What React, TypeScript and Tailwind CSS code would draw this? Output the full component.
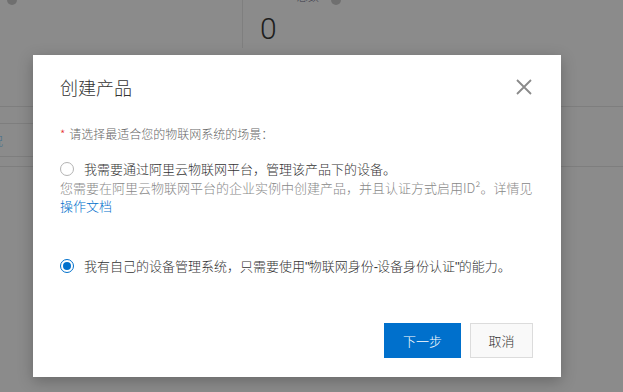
import React from "react";

function Radio({ checked }: { checked?: boolean }) {
  return checked ? (
    <span className="flex h-[14px] w-[14px] shrink-0 items-center justify-center rounded-full border border-[#0070cc] bg-white">
      <span className="h-[8px] w-[8px] rounded-full bg-[#0070cc]" />
    </span>
  ) : (
    <span className="h-[14px] w-[14px] shrink-0 rounded-full border border-[#b3b3b3] bg-white" />
  );
}

function Narrow({ children }: { children: React.ReactNode }) {
  return <span className="font-['Liberation_Sans',sans-serif] tracking-[-1px]">{children}</span>;
}

export default function App() {
  return (
    <div className="relative h-[392px] w-[623px] overflow-hidden bg-[#8b8b8b] font-['Noto_Sans_CJK_SC',sans-serif] font-light">
      {/* dimmed page behind */}
      <div className="flex h-[48px]">
        <div className="w-[243px] border-r border-[#7f7f7f]">
          <div className="-mt-[5px] ml-[7px] h-[10px] w-[10px] rounded-full bg-[#6f6f6f]" />
        </div>
        <div className="flex flex-1">
          <div className="pl-[17px] pt-[11px] font-['Roboto',sans-serif] text-[30px] font-light leading-[36px] text-[#1e1e1e]">
            0
          </div>
          <div className="ml-[20px] -mt-[10px] text-[11px] leading-[12px] text-[#3a3a4a]">总数</div>
          <div className="ml-[12px] -mt-[5px] h-[10px] w-[10px] rounded-full bg-[#6f6f6f]" />
        </div>
      </div>
      <div className="mt-[58px] border-t border-[#7e7e7e]" />
      <div className="mt-[16px] w-[40px] border-t border-[#7e7e7e]" />
      <div className="-ml-[9px] mt-[9px] h-[16px] text-[12px] leading-[16px] text-[#3f6e8c]">况</div>
      <div className="mt-[7px] w-[40px] border-t border-[#7e7e7e]" />
      <div className="mt-[9px] border-t border-[#7e7e7e]" />

      {/* dialog */}
      <div className="absolute left-[33px] top-[55px] flex h-[322px] w-[528px] flex-col bg-white px-[27px] pt-[19px] shadow-[0_4px_14px_rgba(0,0,0,0.25)]">
        <div className="flex items-center justify-between">
          <div className="text-[18px] leading-[26px] text-[#333]">创建产品</div>
          <svg width="16" height="16" viewBox="0 0 16 16" className="mr-[2px]">
            <path d="M1 1 L15 15 M15 1 L1 15" stroke="#8a8a8a" strokeWidth="1.8" fill="none" />
          </svg>
        </div>

        <div className="mt-[25px] text-[12px] leading-[18px] text-[#666]">
          <span className="mr-[4px] text-[#e62e2e]">*</span>请选择最适合您的物联网系统的场景：
        </div>

        <div className="mt-[16px] flex h-[20px] items-center gap-[10px]">
          <Radio />
          <span className="text-[13px] leading-[20px] text-[#333]">我需要通过阿里云物联网平台，管理该产品下的设备。</span>
        </div>
        <div className="text-[13px] leading-[18px] text-[#888]">
          您需要在阿里云物联网平台的企业实例中创建产品，并且认证方式启用ID²。详情见
        </div>
        <div className="text-[13px] leading-[18px] text-[#0070cc]">操作文档</div>

        <div className="mt-[41px] flex h-[20px] items-center gap-[10px]">
          <Radio checked />
          <span className="text-[13px] leading-[20px] text-[#333]">
            我有自己的设备管理系统，只需要使用<Narrow>"</Narrow>物联网身份<Narrow>-</Narrow>设备身份认证<Narrow>"</Narrow>的能力。
          </span>
        </div>

        <div className="mt-[47px] flex justify-end gap-[9px] pr-[1px]">
          <button className="h-[35px] w-[77px] bg-[#0070cc] text-[13px] text-white">下一步</button>
          <button className="h-[35px] w-[63px] border border-[#dcdcdc] bg-[#f9f9f9] text-[13px] text-[#333]">
            取消
          </button>
        </div>
      </div>
    </div>
  );
}
